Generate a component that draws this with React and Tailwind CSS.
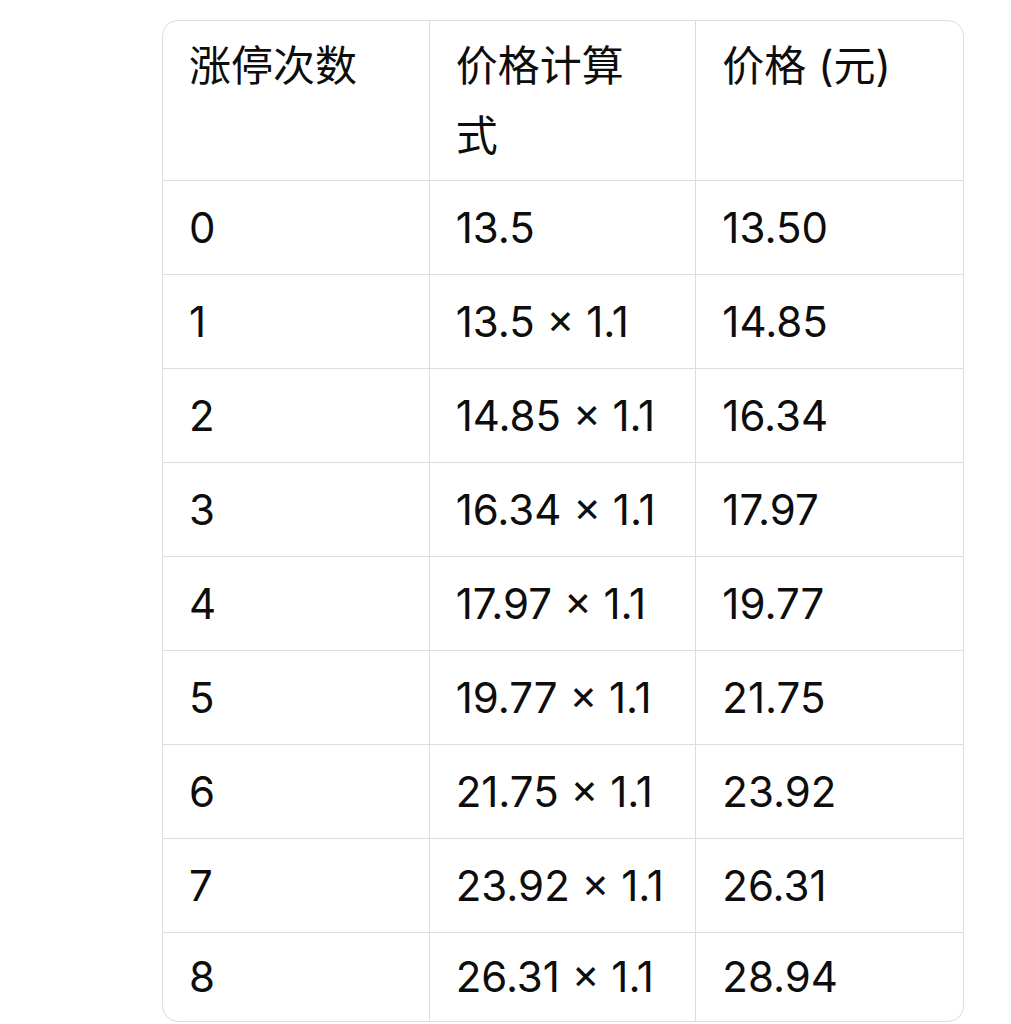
const rows = [
  ['0', '13.5', '13.50'],
  ['1', '13.5 × 1.1', '14.85'],
  ['2', '14.85 × 1.1', '16.34'],
  ['3', '16.34 × 1.1', '17.97'],
  ['4', '17.97 × 1.1', '19.77'],
  ['5', '19.77 × 1.1', '21.75'],
  ['6', '21.75 × 1.1', '23.92'],
  ['7', '23.92 × 1.1', '26.31'],
  ['8', '26.31 × 1.1', '28.94'],
];

const font = { fontFamily: 'Inter, "Noto Sans CJK SC", sans-serif' };

export default function App() {
  return (
    <div className="min-h-screen bg-white pt-[20px] pl-[162px]" style={font}>
      <div className="w-[802px] overflow-hidden rounded-[16px] border border-[#dddddd] text-[42px] leading-[70px] text-[#0d0d0d]">
        <div className="grid grid-cols-3 border-b border-[#dddddd]">
          <div className="h-[159px] border-r border-[#dddddd] px-[26px] pt-[10px]">涨停次数</div>
          <div className="h-[159px] border-r border-[#dddddd] px-[26px] pt-[10px]">
            <div className="max-w-[200px]">价格计算式</div>
          </div>
          <div className="h-[159px] px-[26px] pt-[10px]">价格 (元)</div>
        </div>
        {rows.map((r, i) => {
          const last = i === rows.length - 1;
          const h = last ? 'h-[88px]' : 'h-[93px]';
          return (
            <div key={i} className={`grid grid-cols-3 ${last ? '' : 'border-b border-[#dddddd]'}`}>
              <div className={`flex ${h} items-center border-r border-[#dddddd] px-[26px]`}>{r[0]}</div>
              <div className={`flex ${h} items-center border-r border-[#dddddd] px-[26px]`}>{r[1]}</div>
              <div className={`flex ${h} items-center px-[26px]`}>{r[2]}</div>
            </div>
          );
        })}
      </div>
    </div>
  );
}
